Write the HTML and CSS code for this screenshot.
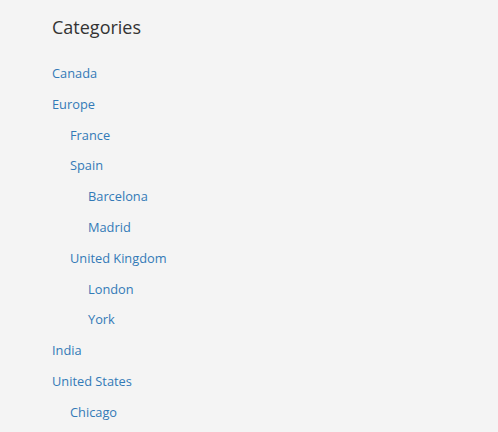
FILE: index.html
```html
<!DOCTYPE html>
<html>
<head>
<meta charset="utf-8">
<link rel="stylesheet" href="styles.css">
</head>
<body>
<div class="panel">
  <h2 class="title">Categories</h2>
  <ul class="tree">
    <li><a href="#">Canada</a></li>
    <li><a href="#">Europe</a>
      <ul>
        <li><a href="#">France</a></li>
        <li><a href="#">Spain</a>
          <ul>
            <li><a href="#">Barcelona</a></li>
            <li><a href="#">Madrid</a></li>
          </ul>
        </li>
        <li><a href="#">United Kingdom</a>
          <ul>
            <li><a href="#">London</a></li>
            <li><a href="#">York</a></li>
          </ul>
        </li>
      </ul>
    </li>
    <li><a href="#">India</a></li>
    <li><a href="#">United States</a>
      <ul>
        <li><a href="#">Chicago</a></li>
      </ul>
    </li>
  </ul>
</div>
</body>
</html>
```
FILE: styles.css
```css
html, body {
  margin: 0;
  padding: 0;
  background: #f4f4f4;
  height: 100%;
  overflow: hidden;
}
body {
  font-family: "Open Sans", "Noto Sans", sans-serif;
}
.panel {
  padding: 14px 0 0 52px;
}
.title {
  margin: 0 0 18px 0;
  font-size: 18px;
  font-weight: 400;
  color: #333;
  line-height: 26px;
}
.tree, .tree ul {
  list-style: none;
  margin: 0;
  padding: 0;
}
.tree ul {
  padding-left: 18px;
}
.tree a {
  display: block;
  font-size: 12.8px;
  line-height: 30.8px;
  color: #337ab7;
  text-decoration: none;
}
```
